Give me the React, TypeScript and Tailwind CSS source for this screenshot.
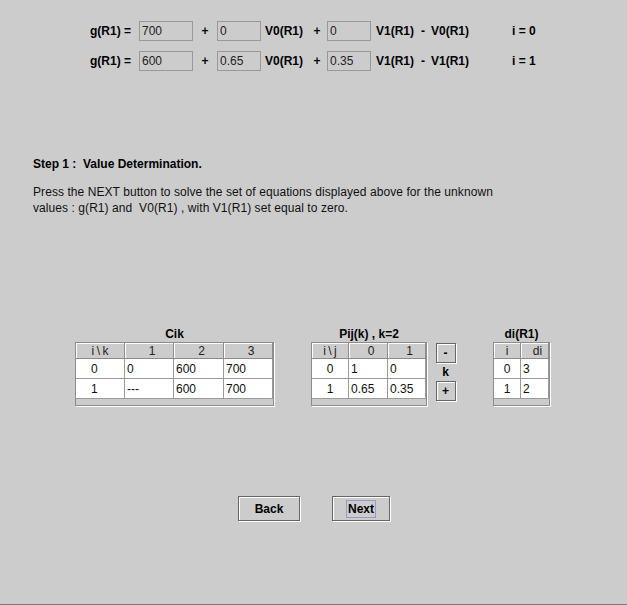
import React from "react";

type Align = "left" | "center";

interface GridProps {
  widths: number[];
  headers: string[];
  rows: string[][];
  firstPad?: number;
  width: number;
}

function Field({ value, w }: { value: string; w: string }) {
  return (
    <div className={`${w} h-[20px] border border-[#999999] flex items-center pl-[2px] font-normal text-[#222222]`}>
      {value}
    </div>
  );
}

function Grid({ widths, headers, rows, firstPad, width }: GridProps) {
  return (
    <div
      className="h-[64px] border border-[#8c8c8c] shadow-[1px_1px_0_#ffffff] bg-[#cccccc] flex flex-col overflow-hidden"
      style={{ width }}
    >
      <div className="flex h-[16px]">
        {headers.map((h, i) => (
          <div
            key={i}
            className={`h-[16px] bg-[#cccccc] border-r border-b border-[#8c8c8c] shadow-[inset_1px_1px_0_#ffffff] flex items-center justify-center text-[#222222] ${i > 0 ? "pl-[6px]" : ""}`}
            style={{ width: widths[i] }}
          >
            {h}
          </div>
        ))}
      </div>
      {rows.map((r, ri) => (
        <div key={ri} className="flex h-[20px]">
          {r.map((c, ci) => {
            const align: Align = ci === 0 && firstPad === undefined ? "center" : "left";
            return (
              <div
                key={ci}
                className={`h-[20px] bg-white border-r border-b border-[#9a9a9a] flex items-center text-[#111111] ${align === "center" ? "justify-center" : "pl-[2px]"}`}
                style={{ width: widths[ci], paddingLeft: ci === 0 && firstPad !== undefined ? firstPad : undefined }}
              >
                {c}
              </div>
            );
          })}
        </div>
      ))}
    </div>
  );
}

function SmallButton({ label }: { label: string }) {
  return (
    <div className="w-[20px] h-[20px] border border-[#666666] shadow-[inset_1px_1px_0_#ffffff,1px_1px_0_#ffffff] flex items-center justify-center font-bold text-black">
      {label}
    </div>
  );
}

function Eq({ a, b, c, last, i }: { a: string; b: string; c: string; last: string; i: string }) {
  return (
    <div className="flex items-center h-[20px] pl-[90px] font-bold">
      <span className="w-[49px]">g(R1) =</span>
      <Field value={a} w="w-[54px]" />
      <span className="w-[24px] text-center">+</span>
      <Field value={b} w="w-[44px]" />
      <span className="w-[46px] pl-[4px]">V0(R1)</span>
      <span className="w-[20px] text-center">+</span>
      <Field value={c} w="w-[44px]" />
      <span className="w-[45px] pl-[5px]">V1(R1)</span>
      <span className="w-[14px] text-center">-</span>
      <span className="w-[81px] pl-[1px]">{last}</span>
      <span className="pl-[1px]">{i}</span>
    </div>
  );
}

export default function App() {
  return (
    <div className="w-[627px] h-[605px] bg-[#cccccc] font-['Liberation_Sans',Arial,sans-serif] text-[12px] leading-[16px] text-black overflow-hidden flex flex-col">
      <div className="flex-1">
        {/* equations */}
        <div className="pt-[21px] flex flex-col gap-[10px]">
          <Eq a="700" b="0" c="0" last="V0(R1)" i="i = 0" />
          <Eq a="600" b="0.65" c="0.35" last="V1(R1)" i="i = 1" />
        </div>

        {/* step text */}
        <div className="mt-[85px] pl-[33px]">
          <div className="font-bold h-[16px]">Step 1 :&nbsp; Value Determination.</div>
          <div className="mt-[12px] text-[#111111] tracking-[0.07px]">
            <div>Press the NEXT button to solve the set of equations displayed above for the unknown</div>
            <div>values : g(R1) and&nbsp; V0(R1) , with V1(R1) set equal to zero.</div>
          </div>
        </div>

        {/* tables */}
        <div className="mt-[110px] flex items-start pl-[75px]">
          <div className="flex flex-col items-center">
            <div className="font-bold h-[16px]">Cik</div>
            <Grid
              width={199}
              widths={[49, 49, 50, 49]}
              headers={["i\u2009\\\u2009k", "1", "2", "3"]}
              rows={[
                ["0", "0", "600", "700"],
                ["1", "---", "600", "700"],
              ]}
              firstPad={15}
            />
          </div>
          <div className="ml-[37px] flex flex-col items-center">
            <div className="font-bold h-[16px]">Pij(k) , k=2</div>
            <Grid
              width={116}
              widths={[37, 39, 38]}
              headers={["i\u2009\\\u2009j", "0", "1"]}
              rows={[
                ["0", "1", "0"],
                ["1", "0.65", "0.35"],
              ]}
            />
          </div>
          <div className="ml-[8px] pt-[17px] flex flex-col items-center w-[21px]">
            <SmallButton label="-" />
            <div className="font-bold h-[18px] flex items-center">k</div>
            <SmallButton label="+" />
          </div>
          <div className="ml-[37px] flex flex-col items-center">
            <div className="font-bold h-[16px]">di(R1)</div>
            <Grid
              width={57}
              widths={[27, 28]}
              headers={["i", "di"]}
              rows={[
                ["0", "3"],
                ["1", "2"],
              ]}
            />
          </div>
        </div>

        {/* nav buttons */}
        <div className="mt-[90px] flex pl-[238px] gap-[32px]">
          <div className="w-[62px] h-[25px] border border-[#666666] shadow-[inset_1px_1px_0_#ffffff,1px_1px_0_#ffffff] flex items-center justify-center font-bold">
            Back
          </div>
          <div className="w-[58px] h-[25px] border border-[#666666] shadow-[inset_1px_1px_0_#ffffff,1px_1px_0_#ffffff] flex items-center justify-center font-bold">
            <span className="border border-[#9999cc] px-[1px] leading-[16px]">Next</span>
          </div>
        </div>
      </div>
      <div className="h-[1px] bg-[#7a7a7a]" />
    </div>
  );
}
